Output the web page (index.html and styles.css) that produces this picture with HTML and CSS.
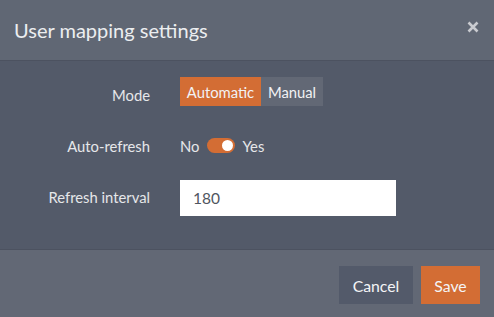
FILE: index.html
```html
<!DOCTYPE html>
<html>
<head>
<meta charset="utf-8">
<link rel="stylesheet" href="styles.css">
</head>
<body>
<div class="dialog">
  <div class="header">
    <div class="title">User mapping settings</div>
    <svg class="close" width="12" height="12" viewBox="0 0 12 12"><path d="M1.5 1.5 L10.5 10.5 M10.5 1.5 L1.5 10.5" stroke="#c9cbd0" stroke-width="2.6" stroke-linecap="butt"/></svg>
  </div>
  <div class="body">
    <div class="row row-mode">
      <div class="label label-mode">Mode</div>
      <div class="control">
        <div class="seg">
          <span class="seg-btn active">Automatic</span><span class="seg-btn">Manual</span>
        </div>
      </div>
    </div>
    <div class="row row-toggle">
      <div class="label">Auto-refresh</div>
      <div class="control toggle-wrap">
        <span class="opt">No</span>
        <span class="toggle"><span class="knob"></span></span>
        <span class="opt">Yes</span>
      </div>
    </div>
    <div class="row row-input">
      <div class="label label-interval">Refresh interval</div>
      <div class="control">
        <div class="input">180</div>
      </div>
    </div>
  </div>
  <div class="footer">
    <button class="btn cancel">Cancel</button>
    <button class="btn save">Save</button>
  </div>
</div>
</body>
</html>
```

FILE: styles.css
```css
html, body {
  margin: 0;
  padding: 0;
  background: #535a69;
}
body {
  font-family: Lato, "Open Sans", sans-serif;
  width: 494px;
  height: 317px;
  overflow: hidden;
}
.dialog {
  display: flex;
  flex-direction: column;
  height: 317px;
}
.header {
  height: 60px;
  background: #606774;
  border-bottom: 1px solid #4c5260;
  display: flex;
  align-items: center;
  justify-content: space-between;
  padding: 0 15px 0 14px;
}
.title {
  color: #eceef0;
  font-size: 20px;
  margin-top: -1px;
}
.close {
  display: block;
  margin-top: -6px;
}
.body {
  background: #535a69;
  padding: 16px 0 0 0;
  height: 172px;
  border-bottom: 1px solid #4c5260;
}
.row {
  display: flex;
  align-items: center;
}
.label {
  text-align: right;
  color: #e6e7ea;
  font-size: 14.8px;
  padding-right: 30px;
  box-sizing: border-box;
  width: 180px;
}
.label-mode {
  margin-top: 7px;
}
.label-interval {
  margin-bottom: 3px;
}
.row-mode {
  height: 29px;
}
.row-toggle {
  height: 29px;
  margin-top: 25px;
}
.row-input {
  height: 36px;
  margin-top: 20px;
}
.seg {
  display: flex;
  height: 29px;
}
.seg-btn {
  display: flex;
  align-items: center;
  justify-content: center;
  height: 29px;
  background: #626875;
  color: #f2f2f4;
  font-size: 14.8px;
  width: 62px;
}
.seg-btn.active {
  background: #d36d34;
  width: 81px;
}
.toggle-wrap {
  display: flex;
  align-items: center;
  color: #e6e7ea;
  font-size: 14.8px;
}
.toggle {
  width: 28px;
  height: 15px;
  border-radius: 8px;
  background: #d36d34;
  margin: 0 7px 0 8px;
  position: relative;
  display: inline-block;
}
.knob {
  position: absolute;
  right: 2px;
  top: 2px;
  width: 11px;
  height: 11px;
  border-radius: 50%;
  background: #ffffff;
}
.input {
  width: 216px;
  height: 36px;
  background: #ffffff;
  box-sizing: border-box;
  padding-left: 13px;
  display: flex;
  align-items: center;
  font-size: 15.5px;
  color: #505560;
}
.footer {
  flex: 1;
  background: #626875;
  display: flex;
  justify-content: flex-end;
  align-items: flex-start;
  padding: 16px 14px 0 0;
  gap: 8px;
}
.btn {
  height: 38px;
  border: none;
  font-family: Lato, "Open Sans", sans-serif;
  font-size: 15.8px;
  color: #f4f4f6;
  padding: 0;
}
.cancel {
  background: #535a6a;
  width: 74px;
}
.save {
  background: #d36d34;
  width: 59px;
}
```
